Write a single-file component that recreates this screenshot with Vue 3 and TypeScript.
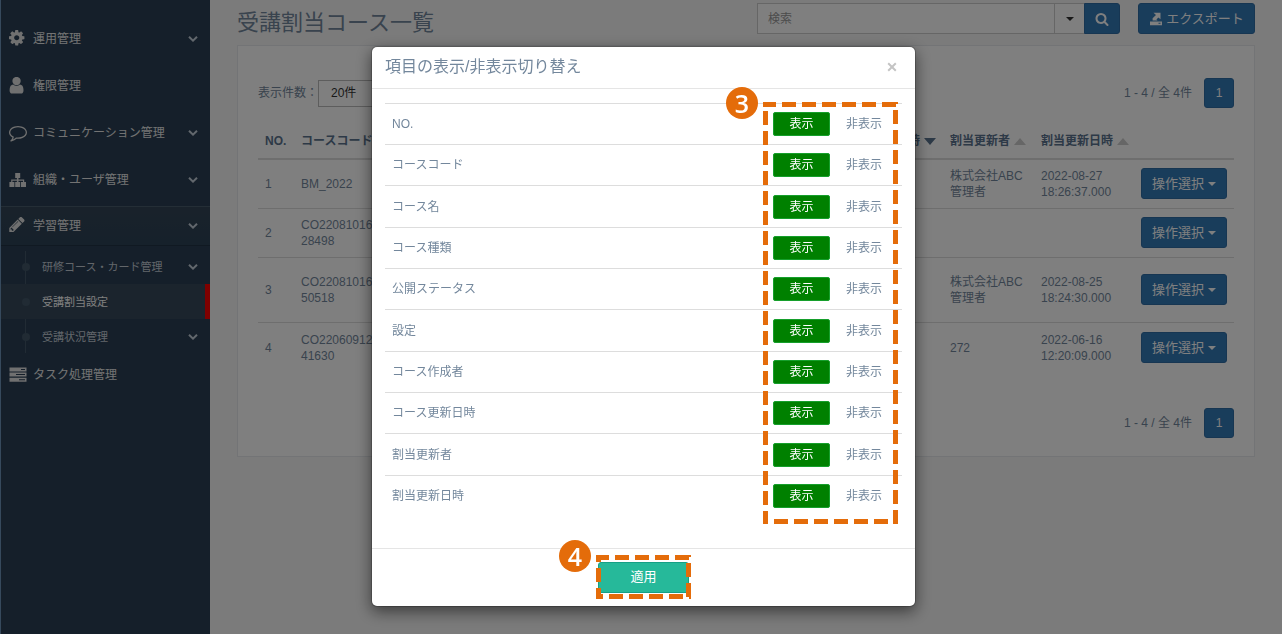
<script setup lang="ts">
import { ref } from 'vue'

interface MenuItem {
  label: string
  icon: string
  open?: boolean
  chevron?: boolean
  children?: { label: string; chevron?: boolean; current?: boolean }[]
}

const menu: MenuItem[] = [
  { label: '運用管理', icon: 'cog', chevron: true },
  { label: '権限管理', icon: 'user' },
  { label: 'コミュニケーション管理', icon: 'comment', chevron: true },
  { label: '組織・ユーザ管理', icon: 'sitemap', chevron: true },
  {
    label: '学習管理',
    icon: 'pencil',
    chevron: true,
    open: true,
    children: [
      { label: '研修コース・カード管理', chevron: true },
      { label: '受講割当設定', current: true },
      { label: '受講状況管理', chevron: true },
    ],
  },
  { label: 'タスク処理管理', icon: 'server' },
]

interface Icon {
  box: string
  path: string
}

const icons: Record<string, Icon> = {
  cog: {
    box: '128 128 1792 1792',
    path: 'M1152 896q0-106-75-181t-181-75-181 75-75 181 75 181 181 75 181-75 75-181zm512-109v222q0 12-8 23t-20 13l-185 28q-19 54-39 91 35 50 107 138 10 12 10 25t-9 23q-27 37-99 108t-94 71q-12 0-26-9l-138-108q-44 23-91 38-16 136-29 186-7 28-36 28h-222q-14 0-24.5-8.5t-11.5-21.5l-28-184q-49-16-90-37l-141 107q-10 9-25 9-14 0-25-11-126-114-165-168-7-10-7-23 0-12 8-23 15-21 51-66.5t54-70.5q-27-50-41-99l-183-27q-13-2-21-12.5t-8-23.5v-222q0-12 8-23t19-13l186-28q14-46 39-92-40-57-107-138-10-12-10-24 0-10 9-23 26-36 98.5-107.5t94.5-71.5q13 0 26 10l138 107q44-23 91-38 16-136 29-186 7-28 36-28h222q14 0 24.5 8.5t11.5 21.5l28 184q49 16 90 37l142-107q9-9 24-9 13 0 25 10 129 119 165 170 7 8 7 22 0 12-8 23-15 21-51 66.5t-54 70.5q26 50 41 98l183 28q13 2 21 12.5t8 23.5z',
  },
  user: {
    box: '200 140 1660 1660',
    path: 'M1536 1399q0 109-62.5 187t-150.5 78h-854q-88 0-150.5-78t-62.5-187q0-85 8.5-160.5t31.5-152 58.5-131 94-89 134.5-34.5q131 128 313 128t313-128q76 0 134.5 34.5t94 89 58.5 131 31.5 152 8.5 160.5zm-256-887q0 159-112.5 271.5t-271.5 112.5-271.5-112.5-112.5-271.5 112.5-271.5 271.5-112.5 271.5 112.5 112.5 271.5z',
  },
  comment: {
    box: '0 60 1792 1792',
    path: 'M896 384q-204 0-381.5 69.5t-282 187.5-104.5 255q0 112 71.5 213.5t201.5 175.5l87 50-27 96q-24 91-70 172 152-63 275-171l43-38 57 6q69 8 130 8 204 0 381.5-69.5t282-187.5 104.5-255-104.5-255-282-187.5-381.5-69.5zm896 512q0 174-120 321.5t-326 233-450 85.5q-70 0-145-8-198 175-460 242-49 14-114 22h-5q-15 0-27-10.5t-16-27.5v-1q-3-4-.5-12t2-10 4.5-9.5l6-9 7-8.5 8-9q7-8 31-34.5t34.5-38 31-39.5 32.5-51 27-59 26-76q-157-89-247.5-220t-90.5-281q0-130 71-248.5t191-204.5 286-136.500 348-50.500 348 50.500 286 136.500 191 204.500 71 248.500z',
  },
  sitemap: {
    box: '0 0 18 18',
    path: 'M6.200 2h5v5H9.500v1.500H15.200v2.500H17v5h-5v-5h2V9.700H9.500V11h1.700v5h-5v-5h1.700V9.700H3.400V11h2v5h-5v-5h1.800V8.500h5.700V7H6.200z',
  },
  pencil: {
    box: '100 160 1792 1792',
    path: 'M491 1536l91-91-235-235-91 91v107h128v128h107zm523-928q0-22-22-22-10 0-17 7l-542 542q-7 7-7 17 0 22 22 22 10 0 17-7l542-542q7-7 7-17zm-54-192l416 416-832 832h-416v-416zm683 96q0 53-37 90l-166 166-416-416 166-165q36-38 90-38 53 0 91 38l235 234q37 39 37 91z',
  },
  server: {
    box: '0 0 18 18',
    path: 'M.5 1.500h17v4H.5zM12 3v1h4V3zM.5 6.600h17v4H.5zM7 8.100v1h9v-1zM.5 11.700h17v4H.5zM10 13.200v1h6v-1z',
  },
}

const keyword = ref('')
const pageSize = ref('20')

const courses = [
  { no: 1, code: 'BM_2022', updater: '株式会社ABC管理者', date: '2022-08-27', time: '18:26:37.000' },
  { no: 2, code: 'CO2208101628498', updater: '', date: '', time: '' },
  { no: 3, code: 'CO2208101650518', updater: '株式会社ABC管理者', date: '2022-08-25', time: '18:24:30.000', tall: true },
  { no: 4, code: 'CO2206091241630', updater: '272', date: '2022-06-16', time: '12:20:09.000' },
]

const columns = ref(
  ['NO.', 'コースコード', 'コース名', 'コース種類', '公開ステータス', '設定', 'コース作成者', 'コース更新日時', '割当更新者', '割当更新日時'].map(
    (label) => ({ label, visible: true }),
  ),
)
</script>

<template>
  <div class="app">
    <nav class="sidebar">
      <ul class="menu">
        <li v-for="item in menu" :key="item.label" class="menu-item" :class="{ open: item.open }">
          <a href="#" class="menu-link">
            <svg class="menu-icon" :viewBox="icons[item.icon].box" aria-hidden="true">
              <path :d="icons[item.icon].path" fill-rule="evenodd" />
            </svg>
            <span class="menu-label">{{ item.label }}</span>
            <svg v-if="item.chevron" class="chevron" viewBox="0 0 10 8" aria-hidden="true">
              <path d="M1 1.8 5 5.6 9 1.8" />
            </svg>
          </a>
          <ul v-if="item.children" class="submenu">
            <li v-for="child in item.children" :key="child.label" class="sub-item" :class="{ current: child.current }">
              <a href="#" class="sub-link">
                <span class="menu-label">{{ child.label }}</span>
                <svg v-if="child.chevron" class="chevron" viewBox="0 0 10 8" aria-hidden="true">
                  <path d="M1 1.8 5 5.6 9 1.8" />
                </svg>
              </a>
            </li>
          </ul>
        </li>
      </ul>
    </nav>

    <main class="content">
      <header class="page-head">
        <h1>受講割当コース一覧</h1>
        <form class="search" @submit.prevent>
          <input v-model="keyword" type="text" placeholder="検索" aria-label="検索" />
          <button type="button" class="search-more" aria-label="検索条件"><i class="caret"></i></button>
          <button type="submit" class="search-go" aria-label="検索する">
            <svg viewBox="0 0 1792 1792" aria-hidden="true">
              <path d="M1216 832q0-185-131.5-316.5t-316.5-131.5-316.5 131.5-131.5 316.5 131.5 316.5 316.5 131.5 316.5-131.5 131.5-316.5zm512 832q0 52-38 90t-90 38q-54 0-90-38l-343-342q-179 124-399 124-143 0-273.5-55.5t-225-150-150-225-55.5-273.5 55.5-273.5 150-225 225-150 273.5-55.5 273.5 55.5 225 150 150 225 55.5 273.5q0 220-124 399l343 343q37 37 37 90z" />
            </svg>
          </button>
        </form>
        <button type="button" class="primary export">
          <svg viewBox="0 0 14 14" aria-hidden="true">
            <path d="M4.500.8h7v6.400L9.400 5.400 7.400 7.400 8.600 8.400H3.600V6.200L7 2.900zM1 9.400h12V13.200H1zM9.500 10.800v1h2v-1z" fill-rule="evenodd" />
          </svg>
          <span>エクスポート</span>
        </button>
      </header>

      <section class="panel">
        <div class="toolbar">
          <label for="page-size">表示件数：</label>
          <select id="page-size" v-model="pageSize">
            <option value="20">20件</option>
          </select>
          <div class="pager">
            <span>1 - 4 / 全 4件</span>
            <button type="button" class="page-no">1</button>
          </div>
        </div>

        <table class="courses">
          <colgroup>
            <col class="c-no" />
            <col class="c-code" />
            <col />
            <col class="c-assigned" />
            <col class="c-updater" />
            <col class="c-date" />
            <col class="c-action" />
          </colgroup>
          <thead>
            <tr>
              <th>NO.</th>
              <th>コースコード</th>
              <th></th>
              <th>割当日時<i class="sort down"></i></th>
              <th>割当更新者<i class="sort"></i></th>
              <th>割当更新日時<i class="sort"></i></th>
              <th></th>
            </tr>
          </thead>
          <tbody>
            <tr v-for="c in courses" :key="c.no" :class="{ tall: c.tall }">
              <td>{{ c.no }}</td>
              <td class="code">{{ c.code }}</td>
              <td></td>
              <td></td>
              <td>{{ c.updater }}</td>
              <td>{{ c.date }}<br />{{ c.time }}</td>
              <td>
                <button type="button" class="primary action">操作選択<i class="caret"></i></button>
              </td>
            </tr>
          </tbody>
        </table>

        <div class="toolbar bottom">
          <div class="pager">
            <span>1 - 4 / 全 4件</span>
            <button type="button" class="page-no">1</button>
          </div>
        </div>
      </section>
    </main>

    <div class="backdrop">
      <div class="modal" role="dialog" aria-labelledby="modal-title">
        <div class="modal-head">
          <h2 id="modal-title">項目の表示/非表示切り替え</h2>
          <button type="button" class="close" aria-label="閉じる">
            <svg viewBox="0 0 10 10" aria-hidden="true"><path d="M1.200 1.200 8.800 8.800M8.800 1.200 1.200 8.800" /></svg>
          </button>
        </div>
        <div class="modal-body">
          <table class="settings">
            <tbody>
              <tr v-for="col in columns" :key="col.label">
                <td>{{ col.label }}</td>
                <td class="toggle-cell">
                  <div class="toggle">
                    <button type="button" :class="{ on: col.visible }" :aria-pressed="col.visible" @click="col.visible = true">表示</button>
                    <button type="button" :class="{ on: !col.visible }" :aria-pressed="!col.visible" @click="col.visible = false">非表示</button>
                  </div>
                </td>
              </tr>
            </tbody>
          </table>
          <div class="callout callout-toggle">
            <svg class="frame" aria-hidden="true">
              <line x1="0" y1="0" x2="100%" y2="0" stroke-dashoffset="1" />
              <line x1="0" y1="0" x2="0" y2="100%" stroke-dashoffset="11" />
              <line x1="100%" y1="0" x2="100%" y2="100%" stroke-dashoffset="12" />
              <line x1="0" y1="100%" x2="100%" y2="100%" stroke-dashoffset="9" />
            </svg>
            <span class="badge">3</span>
          </div>
        </div>
        <div class="modal-foot">
          <div class="apply-wrap">
            <button type="button" class="apply">適用</button>
            <div class="callout callout-apply">
              <svg class="frame" aria-hidden="true">
                <line x1="0" y1="0" x2="100%" y2="0" stroke-dashoffset="1" />
                <line x1="0" y1="0" x2="0" y2="100%" stroke-dashoffset="7" />
                <line x1="100%" y1="0" x2="100%" y2="100%" stroke-dashoffset="12" />
                <line x1="0" y1="100%" x2="100%" y2="100%" stroke-dashoffset="7" />
              </svg>
              <span class="badge">4</span>
            </div>
          </div>
        </div>
      </div>
    </div>
  </div>
</template>

<style>
body {
  margin: 0;
  background: #f7f7f7;
}
</style>

<style scoped>
.app {
  display: flex;
  min-height: 100vh;
  box-sizing: border-box;
  font-family: 'Liberation Sans', 'Noto Sans CJK JP', sans-serif;
  font-size: 12px;
  line-height: 16px;
  color: #73879c;
}
.app *,
.app *::before {
  box-sizing: border-box;
}
button,
input,
select {
  font-family: inherit;
  font-size: inherit;
  line-height: inherit;
  color: inherit;
  margin: 0;
}
button {
  cursor: pointer;
  padding: 0;
}
ul {
  list-style: none;
  margin: 0;
  padding: 0;
}

/* sidebar */
.sidebar {
  flex: 0 0 210px;
  background: #2a3f54;
  border-left: 1px solid #6d93b8;
  padding-top: 18px;
}
.menu-link,
.sub-link {
  display: flex;
  align-items: center;
  color: #e7e7e7;
  text-decoration: none;
  padding-right: 12px;
}
.menu-link {
  height: 41px;
  margin-bottom: 6px;
  padding-left: 8px;
}
.open .menu-link {
  height: 40px;
  margin-bottom: 3px;
  background: linear-gradient(#334556, #2c4257);
  border-top: 1px solid #485c6c;
  border-bottom: 1px solid #213244;
}
.menu-icon {
  width: 18px;
  height: 18px;
  margin-right: 6px;
  fill: #e0e0e0;
}
.menu-label {
  flex: 1;
}
.chevron {
  width: 10px;
  height: 8px;
  fill: none;
  stroke: #c4cfda;
  stroke-width: 2;
}
.submenu {
  position: relative;
}
.submenu::before {
  content: '';
  position: absolute;
  left: 24px;
  top: 2px;
  bottom: 1px;
  width: 1px;
  background: #425668;
}
.sub-item {
  position: relative;
}
.sub-item::before {
  content: '';
  position: absolute;
  left: 21px;
  top: 14px;
  width: 8px;
  height: 8px;
  border-radius: 50%;
  background: #425668;
}
.sub-link {
  height: 35px;
  padding-left: 41px;
  font-size: 11px;
  color: #c4ccd4;
}
.current .sub-link {
  background: #37495b;
  border-right: 5px solid #ff0000;
  color: #ffffff;
}

/* page */
.content {
  flex: 1;
  min-width: 0;
  padding: 3px 27px 0;
}
.page-head {
  display: flex;
  align-items: flex-start;
}
h1 {
  flex: 1;
  margin: 0;
  padding-top: 4px;
  font-size: 22px;
  line-height: 32px;
  font-weight: 400;
}
.search {
  display: flex;
  width: 363px;
  height: 31px;
}
.search input {
  flex: 1;
  min-width: 0;
  border: 1px solid #ccc;
  background: #fff;
  padding: 0 10px;
}
.search input::placeholder {
  color: #999;
}
.search-more {
  width: 29px;
  background: #fff;
  border: 1px solid #ccc;
  border-width: 1px 0;
  color: #333;
}
.caret {
  display: inline-block;
  border: 4px solid transparent;
  border-top-color: currentColor;
  border-bottom: 0;
  vertical-align: middle;
}
.search-go,
.primary,
.page-no {
  background: #337ab7;
  border: 1px solid #2e6da4;
  color: #fff;
  border-radius: 3px;
}
.search-go {
  display: flex;
  align-items: center;
  justify-content: center;
  width: 36px;
  border-radius: 0 3px 3px 0;
}
.search-go svg {
  width: 14px;
  height: 14px;
  fill: #fff;
}
.export {
  display: flex;
  align-items: center;
  justify-content: center;
  gap: 3px;
  width: 117px;
  height: 31px;
  margin-left: 18px;
  font-size: 13px;
}
.export svg {
  width: 14px;
  height: 14px;
  fill: #fff;
}
.panel {
  margin-top: 6px;
  padding: 32px 20px 18px;
  background: #fff;
  border: 1px solid #e6e9ed;
}
.toolbar {
  display: flex;
  align-items: center;
}
.toolbar select {
  width: 90px;
  height: 27px;
  padding: 0 12px;
  appearance: none;
  background: #fff;
  border: 1px solid #bbb;
  border-radius: 0;
  color: #333;
}
.pager {
  display: flex;
  align-items: center;
  gap: 12px;
  margin-left: auto;
}
.page-no {
  width: 30px;
  height: 30px;
}
.toolbar.bottom {
  margin-top: 35px;
}
.courses {
  width: 100%;
  margin-top: 15px;
  table-layout: fixed;
  border-collapse: collapse;
}
.c-no { width: 36px; }
.c-code { width: 90px; }
.c-assigned { width: 78px; }
.c-updater { width: 91px; }
.c-date { width: 100px; }
.c-action { width: 100px; }
.courses th,
.courses td {
  padding: 0 7px;
  text-align: left;
  vertical-align: middle;
}
.courses th {
  height: 36px;
  border-bottom: 2px solid #ddd;
  white-space: nowrap;
  color: #5a738e;
}
.courses td {
  height: 49px;
  border-top: 1px solid #ddd;
}
.courses tr.tall td {
  height: 65px;
}
.courses tr:last-child td {
  height: 51px;
}
.code {
  word-break: break-all;
}
.sort {
  display: inline-block;
  margin-left: 4px;
  border: 6px solid transparent;
  border-top: 0;
  border-bottom: 7px solid #ccc;
  vertical-align: middle;
}
.sort.down {
  border-top: 7px solid #5a738e;
  border-bottom: 0;
}
.action {
  width: 86px;
  height: 31px;
  font-size: 13px;
}
.action .caret {
  margin-left: 4px;
}

/* dialog */
.backdrop {
  position: fixed;
  inset: 0;
  display: flex;
  justify-content: center;
  align-items: flex-start;
  padding: 46px 0 0 5px;
  background: rgba(0, 0, 0, 0.5);
}
.modal {
  width: 545px;
  background: #fff;
  background-clip: padding-box;
  border: 1px solid rgba(0, 0, 0, 0.2);
  border-radius: 6px;
  box-shadow: 0 5px 15px rgba(0, 0, 0, 0.5);
}
.modal-head {
  display: flex;
  align-items: center;
  justify-content: space-between;
  height: 42px;
  padding: 0 18px 2px 13px;
  border-bottom: 1px solid #e5e5e5;
}
h2 {
  margin: 0;
  font-size: 16px;
  line-height: 24px;
  font-weight: 400;
}
.close {
  display: flex;
  border: 0;
  background: none;
}
.close svg {
  width: 10px;
  height: 10px;
  stroke: #c4c4c4;
  stroke-width: 2;
}
.modal-body {
  position: relative;
  padding: 14px 13px 31px;
}
.settings {
  width: 100%;
  border-collapse: collapse;
}
.settings td {
  height: 41px;
  padding: 0 7px;
  border-top: 1px solid #ddd;
}
.settings tr:nth-child(3n) td {
  height: 42px;
}
.settings .toggle-cell {
  width: 129px;
  padding: 0;
}
.toggle {
  display: flex;
}
.toggle button {
  min-width: 57px;
  height: 24px;
  padding: 0 15px;
  border: 1px solid transparent;
  border-radius: 2px;
  background: none;
  line-height: 20px;
}
.toggle button.on {
  background: #008000;
  border-color: #169f2c;
  color: #fff;
}
.modal-foot {
  display: flex;
  justify-content: center;
  padding: 13px 0;
  border-top: 1px solid #e5e5e5;
}
.apply-wrap {
  position: relative;
}
.apply {
  display: block;
  width: 91px;
  height: 31px;
  background: #26b99a;
  border: 1px solid #169f85;
  border-radius: 3px;
  color: #fff;
  font-size: 13px;
}

/* annotations laid over the dialog; half of each 10px stroke is clipped by the frame */
.callout {
  position: absolute;
  pointer-events: none;
}
.frame {
  display: block;
  width: 100%;
  height: 100%;
  overflow: hidden;
}
.frame line {
  stroke: #e46c0a;
  stroke-width: 10;
  stroke-dasharray: 14 6;
}
.callout-toggle {
  top: 13px;
  right: 17px;
  width: 135px;
  height: 422px;
}
.callout-apply {
  inset: -7px -2px -6px;
}
.badge {
  position: absolute;
  left: -37px;
  top: -15px;
  width: 32px;
  height: 32px;
  border-radius: 50%;
  background: #e46c0a;
  color: #fff;
  font-family: 'Open Sans', 'Noto Sans', sans-serif;
  font-size: 25px;
  font-weight: 600;
  line-height: 32px;
  text-align: center;
}
</style>
